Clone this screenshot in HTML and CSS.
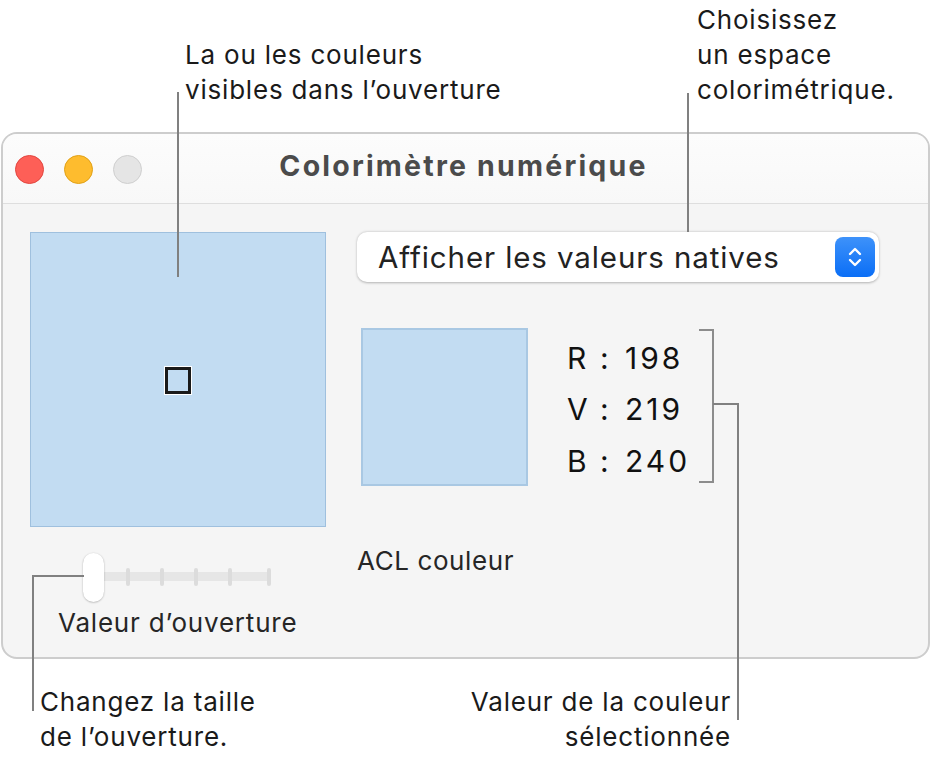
FILE: index.html
```html
<html lang="fr">
<head>
  <meta charset="UTF-8">
  <title>Colorimètre numérique</title>
  <link rel="stylesheet" href="styles.css">
</head>
<body>
  <div class="page">
    <div class="window">
      <div class="titlebar">
        <div class="lights">
          <span class="light red"></span>
          <span class="light yellow"></span>
          <span class="light gray"></span>
        </div>
        <div class="title">Colorimètre numérique</div>
      </div>
      <div class="content">
        <div class="left">
          <div class="aperture">
            <span class="target"></span>
          </div>
          <div class="slider">
            <div class="track">
              <span class="tick"></span>
              <span class="tick"></span>
              <span class="tick"></span>
              <span class="tick"></span>
              <span class="tick last"></span>
            </div>
            <span class="knob"></span>
          </div>
          <div class="slider-label">Valeur d’ouverture</div>
        </div>
        <div class="right">
          <div class="popup">
            <span class="popup-text">Afficher les valeurs natives</span>
            <span class="stepper">
              <svg width="16" height="26" viewBox="0 0 16 26">
                <path d="M3 10 L8 5 L13 10" fill="none" stroke="#fff" stroke-width="2.4" stroke-linecap="round" stroke-linejoin="round"/>
                <path d="M3 16 L8 21 L13 16" fill="none" stroke="#fff" stroke-width="2.4" stroke-linecap="round" stroke-linejoin="round"/>
              </svg>
            </span>
          </div>
          <div class="sample-row">
            <div class="sample"></div>
            <div class="values">
              <span class="key">R</span><span class="colon">:</span><span class="num">198</span>
              <span class="key">V</span><span class="colon">:</span><span class="num">219</span>
              <span class="key">B</span><span class="colon">:</span><span class="num">240</span>
            </div>
            <div class="bracket"></div>
          </div>
          <div class="acl">ACL couleur</div>
        </div>
      </div>
    </div>

    <!-- callouts -->
    <div class="note note-aperture">La ou les couleurs<br>visibles dans l’ouverture</div>
    <div class="note note-space">Choisissez<br>un espace<br>colorimétrique.</div>
    <div class="note note-size">Changez la taille<br>de l’ouverture.</div>
    <div class="note note-value">Valeur de la couleur<br>sélectionnée</div>

    <span class="line line-aperture"></span>
    <span class="line line-space"></span>
    <span class="line line-size-h"></span>
    <span class="line line-size-v"></span>
    <span class="line line-value-h"></span>
    <span class="line line-value-v"></span>
  </div>
</body>
</html>
```

FILE: styles.css
```css
html, body {
  margin: 0;
  padding: 0;
  background: #fff;
}
body {
  font-family: Inter, "Noto Sans", sans-serif;
  color: #1c1c1c;
}
.page {
  position: relative;
  width: 931px;
  height: 758px;
  overflow: hidden;
}
.window {
  box-sizing: border-box;
  width: 929px;
  height: 527px;
  margin: 132px 0 0 1px;
  border: 2px solid #cdcdcd;
  border-radius: 16px;
  background: #f5f5f5;
  overflow: hidden;
}
.titlebar {
  position: relative;
  height: 69px;
  background: linear-gradient(#fcfcfc, #f8f8f8);
  border-bottom: 1px solid #dedede;
  display: flex;
  align-items: center;
}
.lights {
  display: flex;
  gap: 20px;
  padding-left: 12px;
  padding-top: 1px;
}
.light {
  width: 29px;
  height: 29px;
  border-radius: 50%;
  box-sizing: border-box;
}
.red { background: #fe5f57; border: 1px solid #e2463f; }
.yellow { background: #febc2e; border: 1px solid #e1a116; }
.gray { background: #e5e5e5; border: 1px solid #cfcfcf; }
.title {
  position: absolute;
  left: 0;
  right: 0;
  top: 14px;
  padding-right: 4px;
  text-align: center;
  font-size: 28.5px;
  font-weight: 700;
  color: #4b4b4b;
  letter-spacing: 2.2px;
}

.content {
  display: grid;
  grid-template-columns: 296px 522px;
  column-gap: 31px;
  padding: 28px 0 0 27px;
}
.aperture {
  box-sizing: border-box;
  width: 296px;
  height: 295px;
  background: #c2dcf2;
  border: 1px solid #9fc0de;
  display: flex;
  align-items: center;
  justify-content: center;
}
.target {
  box-sizing: border-box;
  width: 26px;
  height: 27px;
  border: 3px solid #1a1a1a;
  outline: 1.5px solid #fff;
  margin: 1px 0 0 -1px;
}

.slider {
  position: relative;
  height: 49px;
  margin-top: 26px;
}
.track {
  position: absolute;
  left: 65px;
  top: 19px;
  width: 176px;
  height: 9px;
  background: #e6e6e6;
  border-radius: 4px;
  display: flex;
  gap: 30px;
  padding-left: 31px;
  box-sizing: border-box;
}
.tick {
  width: 4px;
  height: 18px;
  margin-top: -4px;
  background: #dcdcdc;
  border-radius: 2px;
}
.tick.last {
  margin-left: auto;
}
.knob {
  position: absolute;
  left: 53px;
  top: 0;
  width: 21px;
  height: 49px;
  background: #fff;
  border-radius: 11px;
  box-shadow: 0 0.5px 2px rgba(0,0,0,0.3);
}
.slider-label {
  margin: 5px 0 0 28px;
  font-size: 26px;
  letter-spacing: 0.8px;
  color: #262626;
}

.popup {
  box-sizing: border-box;
  height: 50px;
  background: #fff;
  border-radius: 10px;
  box-shadow: 0 0.5px 2.5px rgba(0,0,0,0.28);
  display: flex;
  align-items: center;
  justify-content: space-between;
  padding: 0 4px 0 21px;
}
.popup-text {
  font-size: 29.5px;
  letter-spacing: 0.9px;
  color: #222;
}
.stepper {
  width: 40px;
  height: 40px;
  border-radius: 8px;
  background: linear-gradient(#3e92fa, #0a6ef6);
  display: flex;
  align-items: center;
  justify-content: center;
}
.sample-row {
  display: flex;
  align-items: flex-start;
  margin-top: 46px;
}
.sample {
  box-sizing: border-box;
  width: 167px;
  height: 158px;
  margin-left: 4px;
  background: #c2dcf2;
  border: 2px solid #a9c8e3;
}
.values {
  box-sizing: border-box;
  width: 171px;
  display: grid;
  grid-template-columns: 30px 28px auto;
  grid-auto-rows: 51.5px;
  align-items: center;
  padding-left: 39px;
  margin-top: 4px;
  font-size: 30px;
  color: #111;
}
.colon {
  padding-left: 3px;
}
.num {
  letter-spacing: 3px;
}
.bracket {
  width: 13px;
  height: 150px;
  margin-top: 1px;
  border: 2px solid #8c8c8c;
  border-left: none;
}
.acl {
  margin-top: 58px;
  font-size: 26px;
  letter-spacing: 0.6px;
  color: #262626;
}

.note {
  position: absolute;
  font-size: 26px;
  line-height: 35px;
  letter-spacing: 0.8px;
  color: #1a1a1a;
}
.note-aperture { left: 185px; top: 37px; }
.note-space { left: 697px; top: 2px; }
.note-size { left: 40px; top: 684px; }
.note-value { left: 431px; top: 684px; width: 300px; text-align: right; }

.line {
  position: absolute;
  background: #808080;
}
.line-aperture { left: 177px; top: 92px; width: 2px; height: 185px; }
.line-space { left: 687px; top: 93px; width: 2px; height: 139px; }
.line-size-h { left: 32px; top: 575px; width: 52px; height: 2px; }
.line-size-v { left: 32px; top: 575px; width: 2px; height: 136px; }
.line-value-h { left: 713px; top: 403px; width: 26px; height: 2px; }
.line-value-v { left: 737px; top: 403px; width: 2px; height: 317px; }
```
